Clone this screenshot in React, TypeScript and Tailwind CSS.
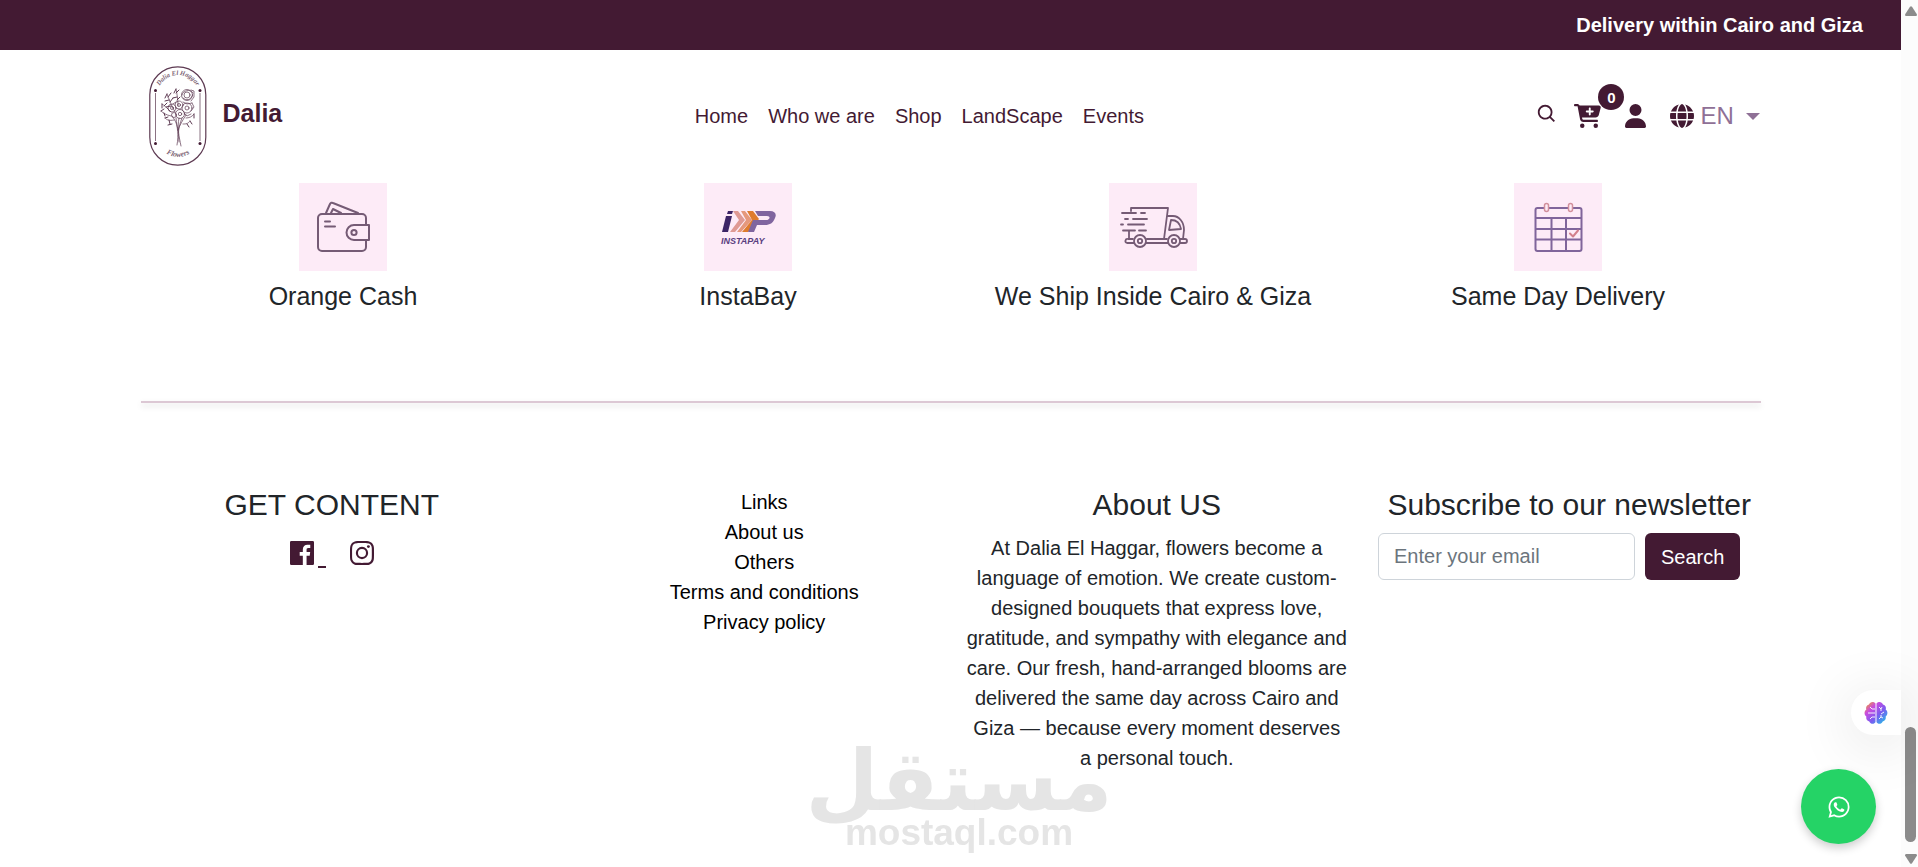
import type { ReactNode } from 'react'
import { BiLogoFacebookSquare, BiLogoInstagram, BiLogoWhatsapp, BiSearch } from 'react-icons/bi'
import { FaCartPlus, FaGlobe, FaUser } from 'react-icons/fa6'

const navLinks = ['Home', 'Who we are', 'Shop', 'LandScape', 'Events']

const footerLinks = ['Links', 'About us', 'Others', 'Terms and conditions', 'Privacy policy']

const features: { title: string; icon: ReactNode }[] = [
  { title: 'Orange Cash', icon: <WalletIcon /> },
  { title: 'InstaBay', icon: <InstaPayIcon /> },
  { title: 'We Ship Inside Cairo & Giza', icon: <TruckIcon /> },
  { title: 'Same Day Delivery', icon: <CalendarIcon /> },
]

function BrandLogo() {
  return (
    <svg viewBox="0 0 58 100" className="h-[100px] w-[58px]" fill="none" stroke="#5d3a52" aria-hidden="true">
      <rect x="0.8" y="0.8" width="56" height="98.4" rx="28" strokeWidth="1.2" />
      <path d="M6.5 27v48M51 27v48" strokeWidth="0.9" opacity="0.8" />
      <g fill="#431a33" stroke="none">
        <circle cx="6.5" cy="24.5" r="1.5" />
        <circle cx="51" cy="24.5" r="1.5" />
        <circle cx="6.5" cy="77.5" r="1.5" />
        <circle cx="51" cy="77.5" r="1.5" />
      </g>
      <path id="arcTop" d="M10 21 A21 21 0 0 1 48 21" stroke="none" />
      <path id="arcBottom" d="M15 86 Q29 96 43 86" stroke="none" />
      <g fill="#7b5f72" stroke="none" fontFamily="Liberation Serif, serif" fontSize="6.5" fontStyle="italic" textAnchor="middle">
        <text><textPath href="#arcTop" startOffset="50%">Dalia El Haggar</textPath></text>
        <text fontSize="7.5"><textPath href="#arcBottom" startOffset="50%">Flowers</textPath></text>
      </g>
      {/* bouquet */}
      <g strokeWidth="0.7" strokeLinecap="round">
        <path d="M30 52c-2 10 0 18 2 28M27 52c1 10 3 16 1 27M33 52c-4 10-4 16-3 24M23 50c4 5 5 9 6 14M37 49c-4 6-6 10-8 15" />
        <path d="M26 46c-4-7-6-13-8-18M22 46c-4-4-7-7-9-8M22 50c-5-1-8-3-10-5M25 54c-5 1-7 0-9-2M29 40c0-7-1-12-2-17M37 52c3 0 6-1 8-4M34 58c3 0 5 0 7-3" />
        <path d="M18 28l-2 4M19 31l3-4M20 34l-4 1M21 36l3-4M22 40l-5 1M13 38l0 4M15 40l3-3M12 45l3-2M15 47l1 3M27 23l-2 4M27 27l3-3M28 31l-4 1M28 34l3-3M16 52l3-1M20 54l1 4M23 58l-4 1M41 55l2 3M38 58l2 3M45 48l0 4" strokeWidth="1" />
        <circle cx="38" cy="29" r="5.5" />
        <circle cx="38" cy="29" r="3" />
        <path d="M33 29c0-4 9-7 11-2M34 32c3 3 8 2 9-2M42 24l3 1 0 6-3 4" />
        <circle cx="30" cy="39" r="4" />
        <circle cx="23" cy="42" r="4" />
        <circle cx="38" cy="42" r="5" />
        <circle cx="31" cy="48" r="4.5" />
        <circle cx="25" cy="49" r="2.5" />
        <circle cx="38" cy="42" r="2" />
        <circle cx="30" cy="39" r="1.5" />
        <circle cx="23" cy="42" r="1.5" />
        <circle cx="31" cy="48" r="1.7" />
        <path d="M34 36l4 2 5-1M42 45l3-4-2-4M18 42l3 3M27 36l-3 2M35 47l3 3 4-2" />
      </g>
    </svg>
  )
}

function WalletIcon() {
  return (
    <svg viewBox="0 0 88 88" className="size-full" fill="none" stroke="#755b75" strokeWidth="2" strokeLinecap="round" strokeLinejoin="round" aria-hidden="true">
      <path d="M67 42v-7a4 4 0 0 0-4-4H23a4 4 0 0 0-4 4v29a4 4 0 0 0 4 4h40a4 4 0 0 0 4-4v-7" />
      <path d="M27 30l4-9q1-2 3-1l25 10M32 30l2-4 8 4" />
      <path d="M70 42H55a7.500 7.500 0 0 0 0 15h15z" />
      <circle cx="55" cy="49.500" r="2.600" />
      <path d="M26 38.500h5M26 43.500h10" />
    </svg>
  )
}

function InstaPayIcon() {
  return (
    <svg viewBox="0 0 88 88" className="size-full" aria-hidden="true">
      <path d="M22 33h6l-4 16h-6zM24 28h5l-1 3h-5z" fill="#3d2566" />
      <path d="M29 28h5l7 9-10 12h-5l9-12z" fill="#df9a94" />
      <path d="M37 28h4l7 9-11 12h-4l9-12z" fill="#e5987c" />
      <path d="M43 28h6l6 8-11 13h-6l10-12z" fill="#de7b2e" />
      <path d="M51 28h15c5 0 7 3 5 7-2 5-5 7-10 7h-8l-3 7h-6l5-12h13c4 0 5-4 1-4H54z" fill="#80659f" />
      <text x="17" y="61" textAnchor="start" fontFamily="Liberation Sans, Arial, sans-serif" fontSize="9" fontWeight="700" fontStyle="italic" fill="#5a3f7f">
        INSTAPAY
      </text>
    </svg>
  )
}

function TruckIcon() {
  return (
    <svg viewBox="0 0 88 88" className="size-full" fill="none" stroke="#755b75" strokeWidth="1.8" strokeLinecap="round" strokeLinejoin="round" aria-hidden="true">
      <path d="M22 28v-3h37l-4 31H38M58 33h6c6 0 11 6 11 14l-1 9h-3M20 48v7" />
      <path d="M62 37c5 0 9 3 10 9l-12 1z" />
      <path d="M24 56h-5a2 2 0 0 0-1 4h7M37 60h22M38 56h20M71 60h5a2 2 0 0 0 0-4h-5" />
      <circle cx="31" cy="58" r="6" />
      <circle cx="31" cy="58" r="2.200" />
      <circle cx="65" cy="58" r="6" />
      <circle cx="65" cy="58" r="2.200" />
      <path d="M13 30h14M32 30h4M16 36h3M24 36h14M12 41.500h2M19 41.500h16M14 47.500h12M30 47.500h7" />
    </svg>
  )
}

function CalendarIcon() {
  return (
    <svg viewBox="0 0 88 88" className="size-full" fill="none" stroke="#80659b" strokeWidth="2" strokeLinecap="round" strokeLinejoin="round" aria-hidden="true">
      <rect x="21.500" y="25" width="46" height="43" rx="2" />
      <path d="M22 35h45M22 46h45M22 56.500h45M37.500 35v33M52 35v33" />
      <rect x="30.500" y="20.500" width="4" height="8" rx="2" fill="#fdebf7" stroke="#d2909c" strokeWidth="1.500" />
      <rect x="54.500" y="20.500" width="4" height="8" rx="2" fill="#fdebf7" stroke="#d2909c" strokeWidth="1.500" />
      <path d="M56 50.500l3 3 5-6" stroke="#d2808c" />
    </svg>
  )
}

function BrainIcon() {
  return (
    <svg viewBox="0 0 24 24" className="size-6" aria-hidden="true">
      <defs>
        <linearGradient id="brain" x1="0" y1="0" x2="1" y2="1">
          <stop offset="0.05" stopColor="#f0a030" />
          <stop offset="0.3" stopColor="#c94be0" />
          <stop offset="0.6" stopColor="#7a5cf0" />
          <stop offset="0.9" stopColor="#2bb5e8" />
        </linearGradient>
      </defs>
      <path
        d="M11.500 2.500C10 .2 6 .5 5 3.500 2.500 4 1.500 6.500 2.300 8.500 0 10 0 14 2.300 15.500 1.800 18 3 20 5.300 20.500 6.500 23.500 10.500 23.500 11.500 21zM12.500 2.500C14 .2 18 .5 19 3.500c2.500.5 3.500 3 2.700 5C24 10 24 14 21.700 15.500c.5 2.500-.7 4.500-3 5-1.200 3-5.200 3-6.200.5z"
        fill="url(#brain)"
      />
      <path d="M4 12h7M6 6l2 2h3M6 18l2-2h3M15 6l2 2 1-2M17 8v2M20 11l-3 2M15 18l2-2 2 1M17 16v-2" fill="none" stroke="#fff" strokeWidth="0.9" />
    </svg>
  )
}

function Navbar() {
  return (
    <nav className="mx-auto flex max-w-[1650px] items-center justify-between px-[15px] py-4">
      <a href="#home" className="mr-5 flex items-center gap-4 pl-2 text-[25px] leading-[30px] font-bold">
        <BrandLogo />
        <span className="pb-1.5">Dalia</span>
      </a>

      <ul className="flex gap-5">
        {navLinks.map((label) => (
          <li key={label}>
            <a href="#home">{label}</a>
          </li>
        ))}
      </ul>

      <div className="flex items-center">
        <button type="button" aria-label="Search" className="mr-4 pb-1">
          <BiSearch size={22} />
        </button>
        <a href="#cart" aria-label="Cart" className="relative mr-6">
          <FaCartPlus size={24} className="w-[27px]" />
          <span className="absolute -top-5 left-6 flex size-[26px] items-center justify-center rounded-full bg-[#431a33] text-[15px] leading-none font-bold text-white">
            0
          </span>
        </a>
        <a href="#account" aria-label="Account" className="mr-6">
          <FaUser size={24} className="w-[21px]" />
        </a>
        <label className="flex items-center text-[24px] leading-[30px] text-[#8f7096]">
          <FaGlobe size={24} className="mr-1.5 text-[#431a33]" />
          <select aria-label="Language" defaultValue="EN" className="w-[46px] appearance-none outline-none">
            <option>EN</option>
            <option>AR</option>
          </select>
          <svg viewBox="0 0 14 7" className="h-[7px] w-3.5" fill="currentColor" aria-hidden="true">
            <path d="M0 0h14L7 7z" />
          </svg>
        </label>
      </div>
    </nav>
  )
}

function Features() {
  return (
    <section className="grid grid-cols-4 pt-px pb-[90px]">
      {features.map((f) => (
        <div key={f.title} className="flex flex-col items-center gap-2.5">
          <div className="size-[88px] bg-[#fdebf7]">{f.icon}</div>
          <h5 className="text-[25px] leading-[30px]">{f.title}</h5>
        </div>
      ))}
    </section>
  )
}

function Footer() {
  return (
    <footer className="-mx-[15px] mt-[84px] grid grid-cols-4 text-center">
      <div className="px-[15px]">
        <h4 className="text-[30px] leading-9">GET CONTENT</h4>
        <div className="mt-3.5 flex justify-center gap-5 text-[#431a33]">
          <a href="#facebook" aria-label="Facebook" className="flex items-end">
            <BiLogoFacebookSquare size={32} />
            <span className="mb-px h-0.5 w-2 bg-[#431a33]" />
          </a>
          <a href="#instagram" aria-label="Instagram">
            <BiLogoInstagram size={32} />
          </a>
        </div>
      </div>

      <ul className="pr-[15px] pl-[55px] text-black">
        {footerLinks.map((label) => (
          <li key={label}>
            <a href="#links">{label}</a>
          </li>
        ))}
      </ul>

      <div className="px-[15px]">
        <h4 className="text-[30px] leading-9">About US</h4>
        <p className="mt-2.5">
          At Dalia El Haggar, flowers become a language of emotion. We create custom-designed
          bouquets that express love, gratitude, and sympathy with elegance and care. Our fresh,
          hand-arranged blooms are delivered the same day across Cairo and Giza — because every
          moment deserves a personal touch.
        </p>
      </div>

      <div className="px-[15px]">
        <h4 className="text-[30px] leading-9">Subscribe to our newsletter</h4>
        <form className="mt-2.5 flex gap-2.5" onSubmit={(e) => e.preventDefault()}>
          <input
            type="email"
            aria-label="Email"
            placeholder="Enter your email"
            className="h-[47px] w-[257px] rounded-md border border-[#ced4da] px-[15px] placeholder:text-[#6c757d]"
          />
          <button type="submit" className="h-[47px] rounded-md bg-[#431a33] px-4 text-white">
            Search
          </button>
        </form>
      </div>
    </footer>
  )
}

function ScrollTrack() {
  return (
    <div className="sticky top-0 flex h-screen w-[17px] flex-col items-center bg-[#fcfcfc] pt-1.5 pb-[3px] pl-0.5" aria-hidden="true">
      <svg viewBox="0 0 12 10" className="h-2.5 w-3" fill="#8b8b8b">
        <path d="M5 .8q1-1 2 0L12 8.500q0 1.500-1 1.500H1Q0 10 0 8.500z" />
      </svg>
      <div className="flex-1" />
      <div className="mb-3 h-[115px] w-[11px] rounded-full bg-[#8b8b8b]" />
      <svg viewBox="0 0 12 10" className="h-2.5 w-3" fill="#8b8b8b">
        <path d="M5 9.200q1 1 2 0L12 1.500Q12 0 11 0H1Q0 0 0 1.500z" />
      </svg>
    </div>
  )
}

export default function App() {
  return (
    <div className="flex min-h-screen items-start bg-white font-['Liberation_Sans',Arial,sans-serif] text-[20px] leading-[30px] text-[#212529]">
      <div className="min-w-0 flex-1">
        <header className="text-[#431a33]">
          <p className="bg-[#431a33] py-2.5 pr-[38px] text-right font-bold text-white">
            Delivery within Cairo and Giza
          </p>
          <Navbar />
        </header>

        <main className="mx-auto max-w-[1650px] px-[15px]">
          <Features />
          <hr className="h-0.5 border-0 bg-[#dcc8d4] shadow-[0_3px_6px_rgba(0,0,0,0.15)]" />
          <Footer />
        </main>
      </div>

      <ScrollTrack />

      {/* watermark */}
      <div className="pointer-events-none fixed bottom-4 left-1/2 flex -translate-x-1/2 flex-col items-center font-bold text-[#e5e5e5]">
        <span lang="ar" dir="rtl" className="font-['DejaVu_Sans',sans-serif] text-[84px] leading-[68px]">
          مستقل
        </span>
        <span className="text-[37px] leading-9">mostaql.com</span>
      </div>

      <button
        type="button"
        aria-label="Assistant"
        className="fixed right-[17px] bottom-[132px] flex h-[45px] w-[50px] items-center rounded-l-full bg-white pl-[13px] shadow-[0_8px_60px_rgba(0,0,0,0.14)]"
      >
        <BrainIcon />
      </button>
      <a
        href="#whatsapp"
        aria-label="WhatsApp"
        className="fixed right-[42px] bottom-[23px] flex size-[75px] items-center justify-center rounded-full bg-[#25d366] text-white shadow-[0_4px_10px_rgba(0,0,0,0.2)]"
      >
        <BiLogoWhatsapp size={28} />
      </a>
    </div>
  )
}
